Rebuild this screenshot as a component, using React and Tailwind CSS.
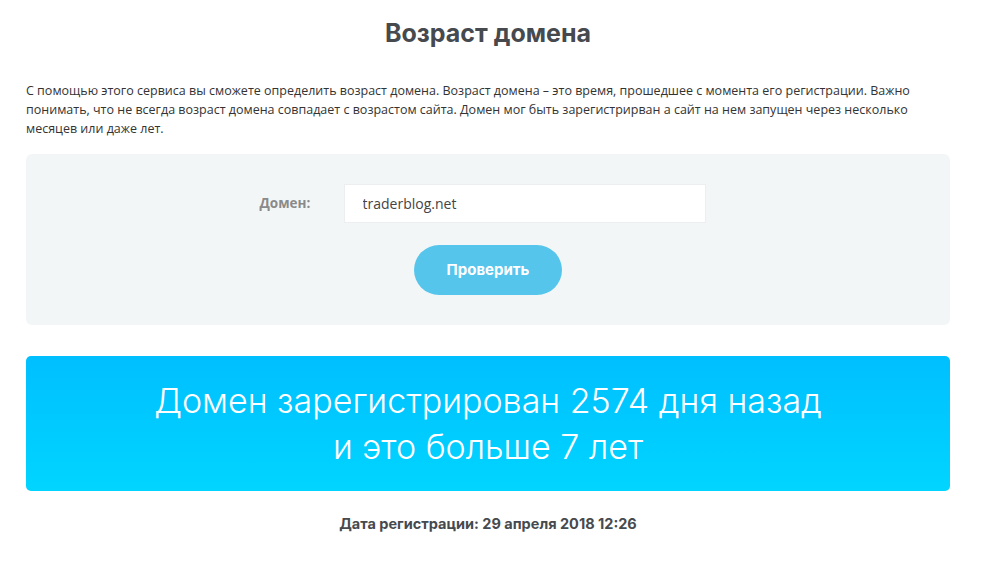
import React, { useState } from 'react';

const App = () => {
  const [domain, setDomain] = useState('traderblog.net');

  return (
    <div className="min-h-screen bg-white font-['Open_Sans','Lato',sans-serif] text-[#333]">
      <div className="ml-[26px] w-[924px] pt-[18px]">
        <h1 className="text-center font-['Inter',sans-serif] text-[25px] font-bold leading-[30px] text-[#464a4e]">Возраст домена</h1>

        <p className="mt-[33px] text-[12.5px] leading-[19px] text-[#333]">
          С помощью этого сервиса вы сможете определить возраст домена. Возраст домена – это время, прошедшее с момента его регистрации. Важно понимать, что не всегда возраст домена совпадает с возрастом сайта. Домен мог быть зарегистрирван а сайт на нем запущен через несколько месяцев или даже лет.
        </p>

        <form
          className="mt-[16px] flex h-[171px] flex-col items-center rounded-md bg-[#f3f6f7] pt-[30px]"
          onSubmit={(e) => e.preventDefault()}
        >
          <div className="mr-[11px] flex items-center">
            <label className="w-[84px] text-[13.5px] font-bold text-[#8a8a8a]">Домен:</label>
            <input
              value={domain}
              onChange={(e) => setDomain(e.target.value)}
              className="h-[39px] w-[362px] border border-[#eceeef] bg-white px-[18px] text-[14px] text-[#444] outline-none"
            />
          </div>
          <button
            type="submit"
            className="mt-[22px] h-[50px] w-[148px] rounded-full bg-[#56c5ec] font-['Inter',sans-serif] text-[15px] font-bold text-white"
          >
            Проверить
          </button>
        </form>

        <div className="mt-[31px] flex h-[135px] flex-col items-center justify-center rounded-[5px] bg-gradient-to-b from-[#00bfff] to-[#00d5ff] text-center font-['Inter',sans-serif] text-[34px] font-light leading-[46px] text-white">
          <div>Домен зарегистрирован 2574 дня назад</div>
          <div>и это больше 7 лет</div>
        </div>

        <p className="mt-[22px] text-center font-['Inter',sans-serif] text-[14.5px] font-bold text-[#464a4e]">
          Дата регистрации: 29 апреля 2018 12:26
        </p>
      </div>
    </div>
  );
};

export default App;
